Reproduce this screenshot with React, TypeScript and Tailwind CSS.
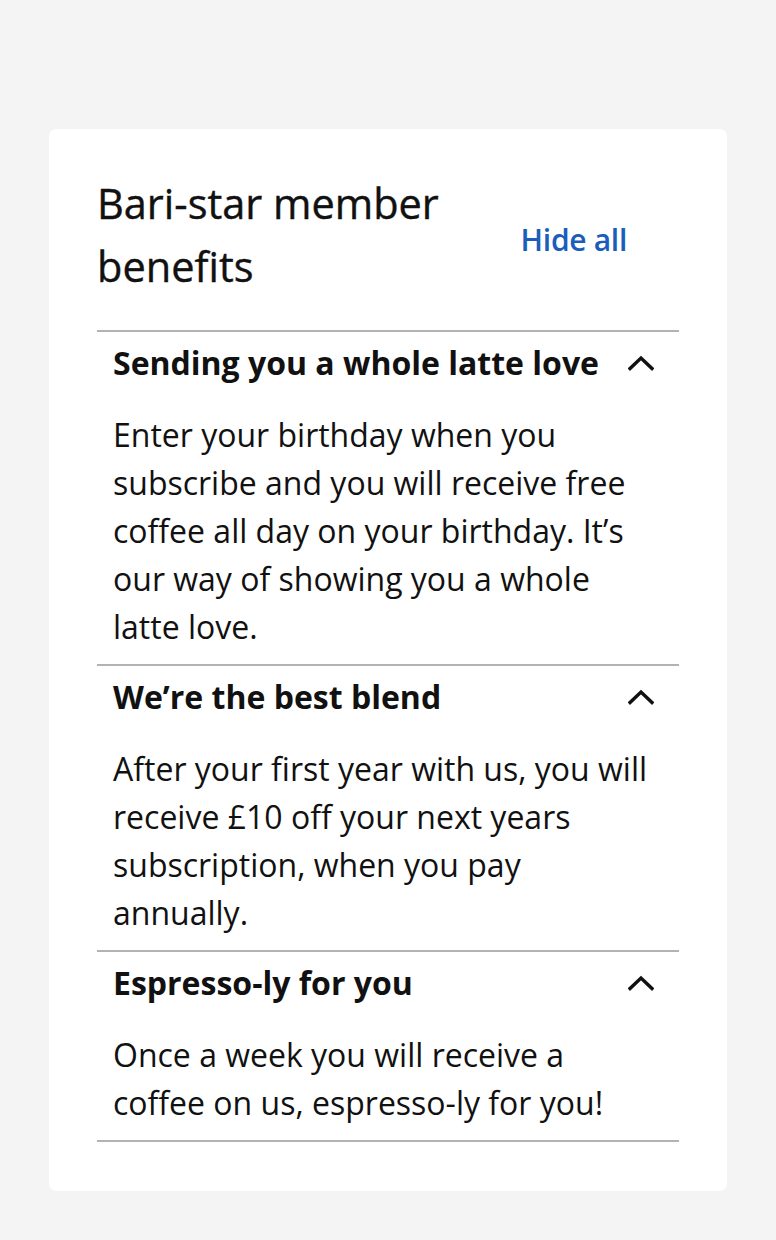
const benefits = [
  {
    title: "Sending you a whole latte love",
    body: "Enter your birthday when you subscribe and you will receive free coffee all day on your birthday. It’s our way of showing you a whole latte love.",
  },
  {
    title: "We’re the best blend",
    body: "After your first year with us, you will receive £10 off your next years subscription, when you pay annually.",
  },
  {
    title: "Espresso-ly for you",
    body: "Once a week you will receive a coffee on us, espresso-ly for you!",
  },
];

function ChevronUp() {
  return (
    <svg width="26" height="16" viewBox="0 0 26 16" fill="none" className="shrink-0">
      <path d="M2 13.5 13 3l11 10.5" stroke="#111" strokeWidth="3.4" strokeLinecap="square" />
    </svg>
  );
}

export default function App() {
  return (
    <div className="min-h-[1240px] bg-[#f4f4f4] pt-[129px] px-[49px] font-['Open_Sans',sans-serif] text-[#111]">
      <section className="bg-white rounded-lg px-12 pt-[43px] pb-[49px]">
        <div className="flex items-center justify-between mb-[32px]">
          <h2 className="text-[41.5px] leading-[63px] font-normal [-webkit-text-stroke:0.4px_#111] max-w-[400px]">
            Bari-star member benefits
          </h2>
          <button className="mt-2 mr-[52px] text-[30px] font-semibold text-[#1a5dbb] tracking-[-0.3px]">
            Hide all
          </button>
        </div>

        <div className="border-b-2 border-[#b3b3b3]">
          {benefits.map((b) => (
            <div key={b.title} className="border-t-2 border-[#b3b3b3]">
              <button className="w-full flex items-center justify-between pl-4 pr-[25px] pt-[7px] text-left">
                <span className="text-[32px] leading-[48px] font-bold">{b.title}</span>
                <ChevronUp />
              </button>
              <p className="pl-4 pr-4 pt-[24px] pb-[13px] text-[32px] leading-[48px]">
                {b.body}
              </p>
            </div>
          ))}
        </div>
      </section>
    </div>
  );
}
